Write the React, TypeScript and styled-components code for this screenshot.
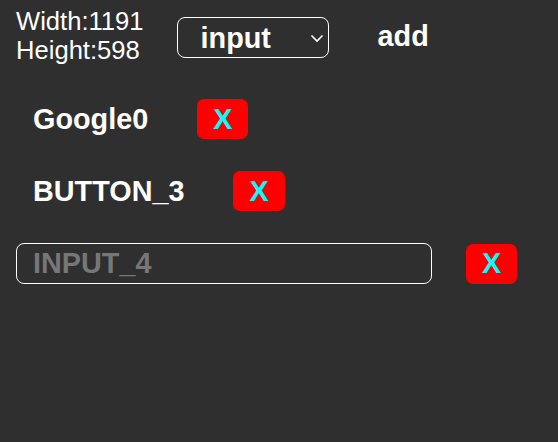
import React, { useState } from "react";
import styled, { createGlobalStyle } from "styled-components";

const GlobalStyle = createGlobalStyle`
    body {
        margin: 0;
        background-color: #2f2f2f;
        font-family: "Liberation Sans", Arial, sans-serif;
    }
`;

const Page = styled.div`
    padding: 7px 16px;
    color: #fff;
`;

const TopBar = styled.div`
    display: flex;
    align-items: center;
`;

const Info = styled.div`
    font-size: 25.6px;
    line-height: 29px;
`;

const SelectWrap = styled.div`
    position: relative;
    margin-left: 33px;
    margin-top: 3px;
    svg {
        position: absolute;
        right: 5px;
        top: 17px;
        pointer-events: none;
    }
`;

const Select = styled.select`
    appearance: none;
    width: 152px;
    height: 41px;
    padding: 0 0 0 23px;
    border: 1px solid #fff;
    border-radius: 8px;
    background: transparent;
    color: #fff;
    font-family: inherit;
    font-size: 28.8px;
    font-weight: bold;
    outline: none;
`;

const TextButton = styled.button<{ $offset?: number }>`
    background: transparent;
    border: none;
    color: #fff;
    font-family: inherit;
    font-size: 28.8px;
    font-weight: bold;
    padding: 0 17px;
    height: 40px;
    margin-left: ${(p) => p.$offset ?? 0}px;
    cursor: pointer;
`;

const List = styled.div`
    display: flex;
    flex-direction: column;
    gap: 32px;
    margin-top: 34px;
`;

const Row = styled.div<{ $gap: number }>`
    display: flex;
    align-items: center;
    gap: ${(p) => p.$gap}px;
`;

const DeleteButton = styled.button`
    height: 40px;
    padding: 0 16px;
    border: none;
    border-radius: 7px;
    background-color: #ff0000;
    color: #00ffff;
    font-family: inherit;
    font-size: 28.8px;
    font-weight: bold;
    cursor: pointer;
`;

const TextInput = styled.input`
    box-sizing: border-box;
    width: 416px;
    height: 41px;
    padding: 0 16px;
    border: 1px solid #fff;
    border-radius: 8px;
    background: transparent;
    color: #fff;
    font-family: inherit;
    font-size: 28.8px;
    font-weight: bold;
    outline: none;
    &::placeholder {
        color: #777;
    }
`;

type Item = { id: number; kind: "button" | "input"; label: string };

export default function App() {
    const [kind, setKind] = useState("input");
    const [items, setItems] = useState<Item[]>([
        { id: 0, kind: "button", label: "Google0" },
        { id: 3, kind: "button", label: "BUTTON_3" },
        { id: 4, kind: "input", label: "INPUT_4" },
    ]);

    const remove = (id: number) => setItems(items.filter((it) => it.id !== id));

    return (
        <>
            <GlobalStyle />
            <Page>
                <TopBar>
                    <Info>
                        <div>Width:1191</div>
                        <div>Height:598</div>
                    </Info>
                    <SelectWrap>
                        <Select value={kind} onChange={(e) => setKind(e.target.value)}>
                            <option value="input">input</option>
                            <option value="button">button</option>
                        </Select>
                        <svg width="14" height="9" viewBox="0 0 14 9">
                            <path d="M1.5 1.5 L7 7 L12.5 1.5" fill="none" stroke="#fff" strokeWidth="1.6" />
                        </svg>
                    </SelectWrap>
                    <TextButton $offset={32}>add</TextButton>
                </TopBar>
                <List>
                    {items.map((it) =>
                        it.kind === "button" ? (
                            <Row key={it.id} $gap={32}>
                                <TextButton>{it.label}</TextButton>
                                <DeleteButton onClick={() => remove(it.id)}>X</DeleteButton>
                            </Row>
                        ) : (
                            <Row key={it.id} $gap={34}>
                                <TextInput placeholder={it.label} />
                                <DeleteButton onClick={() => remove(it.id)}>X</DeleteButton>
                            </Row>
                        )
                    )}
                </List>
            </Page>
        </>
    );
}
